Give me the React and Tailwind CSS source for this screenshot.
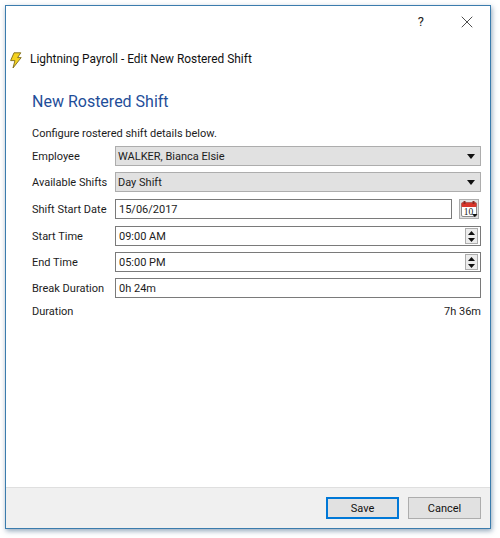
import { X } from "lucide-react";

const font = "font-['Roboto','Noto_Sans',sans-serif]";

function Arrow() {
  return (
    <svg width="8" height="5" viewBox="0 0 8 5" className="shrink-0">
      <path d="M0 0h8L4 5z" fill="#111" />
    </svg>
  );
}

function ComboRow({ label, value }) {
  return (
    <div className="flex items-center h-5">
      <div className="w-[83px] shrink-0">{label}</div>
      <div className="flex-1 h-5 flex items-center justify-between bg-[#e1e1e1] border border-[#adadad] pl-[2px] pr-[5px]">
        <span>{value}</span>
        <Arrow />
      </div>
    </div>
  );
}

function Spinner() {
  return (
    <div className="w-[13px] h-[16px] flex flex-col items-center justify-center gap-[3px] bg-[#ececec] border border-[#adadad]">
      <svg width="7" height="4" viewBox="0 0 7 4"><path d="M0 4h7L3.5 0z" fill="#111" /></svg>
      <svg width="7" height="4" viewBox="0 0 7 4"><path d="M0 0h7L3.5 4z" fill="#111" /></svg>
    </div>
  );
}

function InputRow({ label, value, spinner }) {
  return (
    <div className="flex items-center h-5">
      <div className="w-[83px] shrink-0">{label}</div>
      <div className="flex-1 h-5 flex items-center justify-between bg-white border border-[#7a7a7a] pl-[3px] pr-[2px]">
        <span>{value}</span>
        {spinner && <Spinner />}
      </div>
    </div>
  );
}

function CalendarIcon() {
  return (
    <svg width="18" height="18" viewBox="0 0 18 18">
      <rect x="1.5" y="2.5" width="15" height="14" rx="1.5" fill="#fff" stroke="#8a8a8a" />
      <rect x="1.5" y="2.5" width="15" height="4.5" rx="1" fill="#d8352a" />
      <rect x="3.5" y="1" width="2" height="3" fill="#8c2a22" />
      <rect x="12.5" y="1" width="2" height="3" fill="#8c2a22" />
      <text x="8.5" y="14.5" fontSize="9.5" textAnchor="middle" fill="#222" fontFamily="Liberation Serif, serif">10</text>
      <path d="M12 14h5.5L14.7 17z" fill="#111" />
    </svg>
  );
}

export default function App() {
  return (
    <div className={`w-[500px] h-[538px] bg-white pt-[5px] pl-[5px] text-[11px] leading-none text-[#1c1c1c] ${font}`}>
      <div className="w-[486px] h-[524px] flex flex-col bg-white border border-[#3b7cad] shadow-[1px_2px_5px_rgba(40,80,120,0.5)]">
        {/* title bar */}
        <div className="h-[30px] flex items-center justify-end shrink-0 pr-[13px] pt-[1px]">
          <span className="text-[13px] mr-[33px]">?</span>
          <X size={20} strokeWidth={0.9} className="text-[#111]" />
        </div>
        <div className="h-[36px] flex items-center pl-[3px] pt-[12px] shrink-0 gap-[8px]">
          <svg width="13" height="17" viewBox="0 0 13 17">
            <path d="M5 .8h6.8L8.6 5.6h3.6L4 16l1.9-7.4H1.6z" fill="#f4d21f" stroke="#7d6a1a" strokeWidth="0.9" />
          </svg>
          <span className="text-[11.9px] text-[#111]">Lightning Payroll - Edit New Rostered Shift</span>
        </div>

        <div className="flex-1 pl-[26px] pr-[9px]">
          <h1 className="text-[16px] leading-none text-[#1f4e99] mt-[22px]">New Rostered Shift</h1>
          <p className="mt-[18px]">Configure rostered shift details below.</p>
          <div className="mt-[7px] flex flex-col gap-[6px]">
            <ComboRow label="Employee" value="WALKER, Bianca Elsie" />
            <ComboRow label="Available Shifts" value="Day Shift" />
            <div className="flex items-center gap-[7px] pr-[2px] mt-[1px]">
              <div className="flex-1">
                <InputRow label="Shift Start Date" value="15/06/2017" />
              </div>
              <button className="w-[20px] h-[20px] flex items-center justify-center bg-[#e1e1e1] border border-[#adadad]">
                <CalendarIcon />
              </button>
            </div>
            <div className="mt-[1px]">
              <InputRow label="Start Time" value="09:00 AM" spinner />
            </div>
            <InputRow label="End Time" value="05:00 PM" spinner />
            <InputRow label="Break Duration" value="0h 24m" />
            <div className="flex justify-between mt-[2px]">
              <span>Duration</span>
              <span>7h 36m</span>
            </div>
          </div>
        </div>

        {/* footer */}
        <div className="h-[41px] shrink-0 bg-[#f0f0f0] border-t border-[#dfdfdf] flex items-center justify-end gap-[9px] pr-[9px]">
          <button className="w-[73px] h-[22px] bg-[#e1e1e1] border-2 border-[#0078d7] text-[#111]">Save</button>
          <button className="w-[73px] h-[22px] bg-[#e1e1e1] border border-[#adadad] text-[#111]">Cancel</button>
        </div>
      </div>
    </div>
  );
}
